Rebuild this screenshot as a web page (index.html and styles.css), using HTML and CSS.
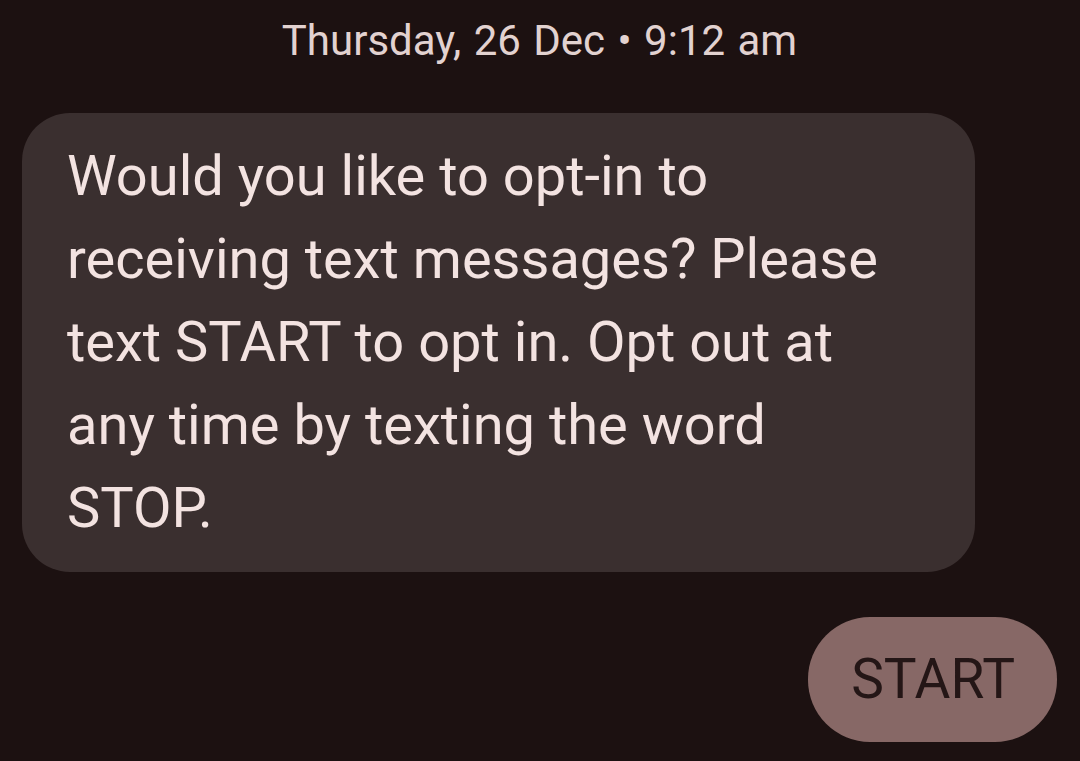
FILE: index.html
```html
<!DOCTYPE html>
<html lang="en">
<head>
  <meta charset="UTF-8" />
  <meta name="viewport" content="width=device-width, initial-scale=1.0"/>
  <title>Messages</title>
  <link rel="stylesheet" href="styles.css">
</head>
<body>
  <div class="thread">
    <div class="timestamp">Thursday, 26 Dec &bull; 9:12 am</div>

    <div class="bubble incoming">
      Would you like to opt-in to<br>
      receiving text messages? Please<br>
      text START to opt in. Opt out at<br>
      any time by texting the word<br>
      STOP.
    </div>

    <div class="row outgoing-row">
      <div class="bubble outgoing">START</div>
    </div>
  </div>
</body>
</html>
```

FILE: styles.css
```css
body {
  margin: 0;
  background: #1c1111;
  font-family: Roboto, "Noto Sans", sans-serif;
  color: #f3e3e1;
}

.thread {
  display: flex;
  flex-direction: column;
  padding: 13px 23px 0 22px;
}

.timestamp {
  text-align: center;
  font-size: 42px;
  line-height: 56px;
  word-spacing: 2px;
  color: #e2d2d0;
}

.bubble {
  font-size: 56px;
  line-height: 83px;
}

.incoming {
  margin-top: 44px;
  width: 953px;
  box-sizing: border-box;
  padding: 22px 45px 22px 45px;
  background: #3a2f2f;
  border-radius: 48px;
  white-space: nowrap;
}

.outgoing-row {
  display: flex;
  justify-content: flex-end;
  margin-top: 45px;
}

.outgoing {
  font-size: 55px;
  background: #876866;
  color: #241616;
  padding: 21px 42px 21px 43px;
  border-radius: 62px;
}
```
